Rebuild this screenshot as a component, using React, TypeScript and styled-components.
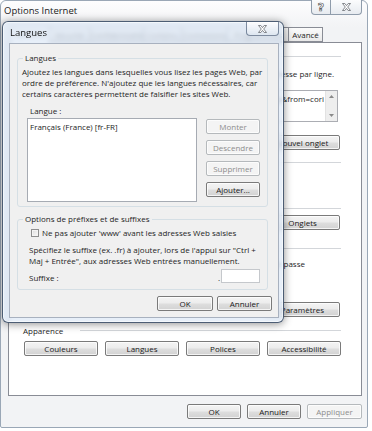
import { createGlobalStyle, styled } from "styled-components";

const GlobalStyle = createGlobalStyle`
  html, body {
    margin: 0;
    padding: 0;
    background: #ffffff;
  }
  body {
    font-family: "Open Sans", "Noto Sans", sans-serif;
    font-size: 8px;
    color: #1e1e1e;
  }
  * {
    box-sizing: border-box;
  }
`;

const Screen = styled.div`
  position: relative;
  width: 372px;
  height: 431px;
  overflow: hidden;
`;

/* ---------- outer window : Options Internet ---------- */

const Window = styled.div`
  width: 368px;
  height: 428px;
  border: 1px solid #9aa7b6;
  border-radius: 6px 6px 2px 2px;
  background: #f2f3f5;
  display: flex;
  flex-direction: column;
`;

const TitleBar = styled.div`
  height: 26px;
  display: flex;
  justify-content: space-between;
  align-items: flex-start;
  padding-left: 3px;
  border-radius: 6px 6px 0 0;
  background: linear-gradient(#fdfdfe, #f2f3f5);
`;

const TitleText = styled.span`
  font-size: 9.5px;
  line-height: 19px;
  color: #1b1b1b;
`;

const CaptionGroup = styled.div`
  display: flex;
  margin-right: 5px;
  margin-top: -1px;
`;

const CaptionButton = styled.div<{ $w: number; $first?: boolean }>`
  width: ${(p) => p.$w}px;
  height: 15px;
  display: flex;
  align-items: center;
  justify-content: center;
  border: 1px solid #8f9cab;
  border-top: none;
  border-left: ${(p) => (p.$first ? "1px solid #8f9cab" : "none")};
  border-radius: ${(p) => (p.$first ? "0 0 0 4px" : "0 0 4px 0")};
  background: linear-gradient(#fbfcfd, #e7ebf0);
`;

const HelpGlyph = styled.span`
  font-family: "DejaVu Sans", sans-serif;
  font-weight: bold;
  font-size: 11px;
  line-height: 11px;
  color: #ffffff;
  -webkit-text-stroke: 0.7px #5f5f5f;
`;

const Client = styled.div`
  flex: 1;
  display: flex;
  flex-direction: column;
  padding: 0 5px 0 7px;
`;

const TabRow = styled.div`
  display: flex;
  align-items: flex-end;
  height: 15px;
  padding-left: 2px;
`;

const Tab = styled.div<{ $w: number; $active?: boolean }>`
  position: relative;
  z-index: ${(p) => (p.$active ? 1 : 0)};
  width: ${(p) => p.$w}px;
  height: ${(p) => (p.$active ? 17 : 15)}px;
  margin-bottom: ${(p) => (p.$active ? -1 : 0)}px;
  border: 1px solid #898c95;
  border-bottom: ${(p) => (p.$active ? "none" : "1px solid #898c95")};
  border-left: ${(p) => (p.$active ? "1px solid #898c95" : "none")};
  background: ${(p) => (p.$active ? "#ffffff" : "linear-gradient(#fbfbfb, #e9e9e9)")};
  text-align: center;
  line-height: 13px;
  white-space: nowrap;
`;

const Panel = styled.div`
  height: 354px;
  border: 1px solid #898c95;
  background: #ffffff;
  padding: 0 20px 0 14px;
  display: flex;
  flex-direction: column;
  overflow: hidden;
`;

/* section separator: label sits under the dialog, only the rule shows */
const SectionRule = styled.div<{ $mt: number; $label?: boolean }>`
  display: flex;
  align-items: center;
  height: 12px;
  margin-top: ${(p) => p.$mt}px;
  padding-left: ${(p) => (p.$label ? 0 : 70)}px;
  white-space: nowrap;
  &::after {
    content: "";
    flex: 1;
    height: 1px;
    margin-left: ${(p) => (p.$label ? 17 : 0)}px;
    background: #d3d6da;
  }
`;

const TextLine = styled.div<{ $mt?: number; $end?: number }>`
  display: flex;
  justify-content: flex-end;
  height: 11px;
  line-height: 11px;
  margin-top: ${(p) => p.$mt ?? 0}px;
  padding-right: ${(p) => p.$end ?? 0}px;
  white-space: nowrap;
`;

const Gap = styled.div<{ $h: number }>`
  height: ${(p) => p.$h}px;
`;

const AddressBox = styled.div`
  display: grid;
  grid-template-columns: minmax(0, 1fr) 12px;
  height: 32px;
  margin: 11px 3px 0 33px;
  border: 1px solid #abadb3;
  background: #ffffff;
`;

const AddressText = styled.div`
  overflow: hidden;
  padding: 2px 1px 0 3px;
  line-height: 11px;
  white-space: nowrap;
  text-align: right;
`;

const ScrollTrack = styled.div`
  display: flex;
  flex-direction: column;
  justify-content: space-between;
  align-items: center;
  padding: 4px 0;
  background: #eeeeee;
  border-left: 1px solid #e2e2e2;
`;

const ButtonRow = styled.div<{ $mt: number; $pr?: number; $gap?: number; $pl?: number }>`
  display: flex;
  justify-content: ${(p) => (p.$pl !== undefined ? "flex-start" : "flex-end")};
  gap: ${(p) => p.$gap ?? 6}px;
  margin-top: ${(p) => p.$mt}px;
  padding-right: ${(p) => p.$pr ?? 0}px;
  padding-left: ${(p) => p.$pl ?? 0}px;
`;

const Button = styled.button<{ $w: number; $off?: boolean }>`
  width: ${(p) => p.$w}px;
  height: 15px;
  padding: 0;
  flex-shrink: 0;
  border: 1px solid ${(p) => (p.$off ? "#b5b9bc" : "#7a7a7a")};
  border-radius: 2px;
  background: ${(p) =>
    p.$off
      ? "#f4f4f4"
      : "linear-gradient(#f4f4f4 0%, #ececec 48%, #dedede 52%, #d2d2d2 100%)"};
  box-shadow: inset 0 0 0 1px rgba(255, 255, 255, 0.75);
  font-family: inherit;
  font-size: 8px;
  line-height: 13px;
  color: ${(p) => (p.$off ? "#8d8d8d" : "#1a1a1a")};
  white-space: nowrap;
`;

/* ---------- overlay dialog : Langues ---------- */

const Dialog = styled.div`
  position: absolute;
  z-index: 5;
  left: 2px;
  top: 21px;
  width: 282px;
  height: 302px;
  border: 1px solid rgba(38, 56, 82, 0.8);
  border-radius: 6px;
  padding: 0 4px 4px 6px;
  background: rgba(222, 233, 246, 0.72);
  backdrop-filter: blur(2.5px);
  box-shadow: inset 0 0 0 1px rgba(255, 255, 255, 0.55), 0 1px 8px rgba(0, 0, 0, 0.45);
  display: flex;
  flex-direction: column;
`;

const DialogTitleBar = styled.div`
  height: 21px;
  display: flex;
  justify-content: space-between;
  align-items: center;
  padding-left: 1px;
`;

const DialogTitle = styled.span`
  font-size: 9.5px;
  color: #111111;
`;

const DialogClose = styled.div`
  align-self: flex-start;
  width: 33px;
  height: 14px;
  display: flex;
  align-items: center;
  justify-content: center;
  border: 1px solid rgba(60, 80, 110, 0.65);
  border-top: none;
  border-radius: 0 0 4px 4px;
  background: linear-gradient(rgba(255, 255, 255, 0.85), rgba(222, 231, 241, 0.8));
`;

const DialogBody = styled.div`
  flex: 1;
  display: flex;
  flex-direction: column;
  background: #f0f0f0;
  border: 1px solid rgba(80, 100, 130, 0.45);
`;

const Group = styled.fieldset<{ $mt: number; $pl: number }>`
  margin: ${(p) => p.$mt}px 10px 0 7px;
  padding: 2px 7px ${(p) => (p.$pl > 6 ? 6 : 4)}px ${(p) => p.$pl}px;
  border: 1px solid #d5dfe5;
  border-radius: 3px;
  min-width: 0;
`;

const Legend = styled.legend<{ $shift: number }>`
  padding: 0 2px;
  margin-left: ${(p) => p.$shift}px;
  line-height: 12px;
  font-size: 8px;
`;

const Paragraph = styled.div<{ $mt?: number }>`
  line-height: 11px;
  white-space: nowrap;
  margin-top: ${(p) => p.$mt ?? 0}px;
`;

const FieldLabel = styled.div<{ $pl?: number }>`
  margin-top: 6px;
  padding-left: ${(p) => p.$pl ?? 0}px;
  line-height: 11px;
`;

const ListRow = styled.div`
  display: flex;
  gap: 9px;
  margin-top: 2px;
  padding-left: 5px;
`;

const ListBox = styled.div`
  width: 170px;
  height: 84px;
  padding: 2px 2px;
  border: 1px solid #a6abb3;
  background: #ffffff;
  line-height: 11px;
`;

const ButtonColumn = styled.div`
  display: flex;
  flex-direction: column;
  gap: 6px;
  margin-top: 1px;
`;

const CheckRow = styled.div`
  display: flex;
  align-items: center;
  gap: 3px;
  height: 11px;
  padding-left: 2px;
`;

const CheckBox = styled.span`
  width: 8px;
  height: 8px;
  border: 1px solid #8e8f8f;
  background: linear-gradient(135deg, #dcdcdc, #fbfbfb);
  box-shadow: inset 0 0 0 1px #f4f4f4;
`;

const SuffixRow = styled.div`
  display: flex;
  align-items: flex-end;
  height: 14px;
  margin-top: 3px;
  line-height: 11px;
`;

const Spacer = styled.div`
  flex: 1;
`;

const SuffixInput = styled.div`
  width: 39px;
  height: 14px;
  margin-left: 1px;
  border: 1px solid #c5c8cc;
  background: #ffffff;
`;

const tabs = [
  { label: "Général", w: 40, active: true },
  { label: "Sécurité", w: 40 },
  { label: "Confidentialité", w: 54 },
  { label: "Contenu", w: 38 },
  { label: "Connexions", w: 46 },
  { label: "Programmes", w: 61 },
  { label: "Avancé", w: 34 },
];

function CloseGlyph() {
  return (
    <svg width="9" height="8" viewBox="0 0 9 8">
      <polygon
        points="0.5,0.5 2.8,0.5 4.5,2.6 6.2,0.5 8.5,0.5 5.7,4 8.5,7.5 6.2,7.5 4.5,5.4 2.8,7.5 0.5,7.5 3.3,4"
        fill="#ffffff"
        stroke="#666a70"
        strokeWidth="0.8"
        strokeLinejoin="round"
      />
    </svg>
  );
}

function Arrow({ up }: { up?: boolean }) {
  return (
    <svg width="5" height="3" viewBox="0 0 5 3">
      <polygon points={up ? "0,3 5,3 2.5,0" : "0,0 5,0 2.5,3"} fill="#8a8a8a" />
    </svg>
  );
}

export default function App() {
  return (
    <Screen>
      <GlobalStyle />
      <Window>
        <TitleBar>
          <TitleText>Options Internet</TitleText>
          <CaptionGroup>
            <CaptionButton $w={20} $first>
              <HelpGlyph>?</HelpGlyph>
            </CaptionButton>
            <CaptionButton $w={31}>
              <CloseGlyph />
            </CaptionButton>
          </CaptionGroup>
        </TitleBar>
        <Client>
          <TabRow>
            {tabs.map((t) => (
              <Tab key={t.label} $w={t.w} $active={t.active}>
                {t.label}
              </Tab>
            ))}
          </TabRow>
          <Panel>
            <SectionRule $mt={7} />
            <TextLine $mt={6} $end={7}>
              tapez une adresse par ligne.
            </TextLine>
            <AddressBox>
              <AddressText>iehp&amp;from=cori</AddressText>
              <ScrollTrack>
                <Arrow up />
                <Arrow />
              </ScrollTrack>
            </AddressBox>
            <ButtonRow $mt={13} $pr={1}>
              <Button $w={75}>Nouvel onglet</Button>
            </ButtonRow>
            <SectionRule $mt={6} />
            <Gap $h={34} />
            <SectionRule $mt={0} />
            <ButtonRow $mt={1} $pr={1}>
              <Button $w={75}>Onglets</Button>
            </ButtonRow>
            <SectionRule $mt={12} />
            <TextLine $mt={4} $end={36}>
              les mots de passe
            </TextLine>
            <Gap $h={25} />
            <ButtonRow $mt={8} $pr={1}>
              <Button $w={75}>Paramètres</Button>
            </ButtonRow>
            <SectionRule $mt={7} $label>
              Apparence
            </SectionRule>
            <ButtonRow $mt={5} $pl={1} $gap={7}>
              <Button $w={74}>Couleurs</Button>
              <Button $w={74}>Langues</Button>
              <Button $w={74}>Polices</Button>
              <Button $w={74}>Accessibilité</Button>
            </ButtonRow>
          </Panel>
          <ButtonRow $mt={8} $gap={6}>
            <Button $w={54}>OK</Button>
            <Button $w={54}>Annuler</Button>
            <Button $w={55} $off>
              Appliquer
            </Button>
          </ButtonRow>
        </Client>
      </Window>

      <Dialog>
        <DialogTitleBar>
          <DialogTitle>Langues</DialogTitle>
          <DialogClose>
            <CloseGlyph />
          </DialogClose>
        </DialogTitleBar>
        <DialogBody>
          <Group $mt={8} $pl={4}>
            <Legend $shift={1}>Langues</Legend>
            <Paragraph>
              Ajoutez les langues dans lesquelles vous lisez les pages Web, par
              <br />
              ordre de préférence. N'ajoutez que les langues nécessaires, car
              <br />
              certains caractères permettent de falsifier les sites Web.
            </Paragraph>
            <FieldLabel $pl={8}>Langue :</FieldLabel>
            <ListRow>
              <ListBox>Français (France) [fr-FR]</ListBox>
              <ButtonColumn>
                <Button $w={54} $off>
                  Monter
                </Button>
                <Button $w={54} $off>
                  Descendre
                </Button>
                <Button $w={54} $off>
                  Supprimer
                </Button>
                <Button $w={54}>Ajouter...</Button>
              </ButtonColumn>
            </ListRow>
          </Group>
          <Group $mt={6} $pl={11}>
            <Legend $shift={-6}>Options de préfixes et de suffixes</Legend>
            <CheckRow>
              <CheckBox />
              Ne pas ajouter 'www' avant les adresses Web saisies
            </CheckRow>
            <Paragraph $mt={6}>
              Spécifiez le suffixe (ex. .fr) à ajouter, lors de l'appui sur "Ctrl +
              <br />
              Maj + Entrée", aux adresses Web entrées manuellement.
            </Paragraph>
            <SuffixRow>
              Suffixe :
              <Spacer />.
              <SuffixInput />
            </SuffixRow>
          </Group>
          <ButtonRow $mt={6} $pr={6} $gap={4}>
            <Button $w={56}>OK</Button>
            <Button $w={55}>Annuler</Button>
          </ButtonRow>
        </DialogBody>
      </Dialog>
    </Screen>
  );
}
